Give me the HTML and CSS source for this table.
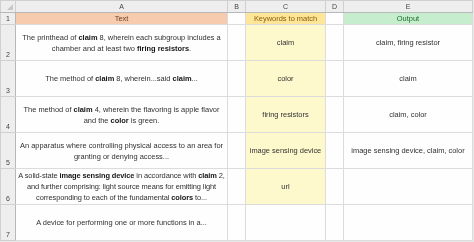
FILE: index.html
```html
<!DOCTYPE html>
<html>
<head>
<meta charset="utf-8">
<link rel="stylesheet" href="styles.css">
</head>
<body>
<table class="sheet">
  <colgroup>
    <col class="c-rh"><col class="c-a"><col class="c-b"><col class="c-c"><col class="c-d"><col class="c-e">
  </colgroup>
  <tr class="colhead">
    <th class="corner"><span class="tri"></span></th>
    <th>A</th><th>B</th><th>C</th><th>D</th><th>E</th>
  </tr>
  <tr class="r1">
    <th class="rh">1</th>
    <td class="h-text">Text</td>
    <td></td>
    <td class="h-kw">Keywords to match</td>
    <td></td>
    <td class="h-out">Output</td>
  </tr>
  <tr class="row">
    <th class="rh">2</th>
    <td>The printhead of <b>claim</b> 8, wherein each subgroup includes a<br>chamber and at least two <b>firing resistors</b>.</td>
    <td></td>
    <td class="kw">claim</td>
    <td></td>
    <td>claim, firing resistor</td>
  </tr>
  <tr class="row">
    <th class="rh">3</th>
    <td>The method of <b>claim</b> 8, wherein...said <b>claim</b>...</td>
    <td></td>
    <td class="kw">color</td>
    <td></td>
    <td>claim</td>
  </tr>
  <tr class="row">
    <th class="rh">4</th>
    <td>The method of <b>claim</b> 4, wherein the flavoring is apple flavor<br>and the <b>color</b> is green.</td>
    <td></td>
    <td class="kw">firing resistors</td>
    <td></td>
    <td>claim, color</td>
  </tr>
  <tr class="row">
    <th class="rh">5</th>
    <td>An apparatus where controlling physical access to an area for<br>granting or denying access...</td>
    <td></td>
    <td class="kw">image sensing device</td>
    <td></td>
    <td>image sensing device, claim, color</td>
  </tr>
  <tr class="row">
    <th class="rh">6</th>
    <td class="tight">A solid-state <b>image sensing device</b> in accordance with <b>claim</b> 2,<br>and further comprising: light source means for emitting light<br>corresponding to each of the fundamental <b>colors</b> to...</td>
    <td></td>
    <td class="kw">url</td>
    <td></td>
    <td></td>
  </tr>
  <tr class="row">
    <th class="rh">7</th>
    <td>A device for performing one or more functions in a...</td>
    <td></td>
    <td></td>
    <td></td>
    <td></td>
  </tr>
</table>
</body>
</html>
```
FILE: styles.css
```css
html, body {
  margin: 0;
  padding: 0;
  background: #e9e9e9;
}
.sheet {
  border-collapse: collapse;
  table-layout: fixed;
  width: 472px;
  font-family: "Liberation Sans", Arial, sans-serif;
  font-size: 7.45px;
  color: #303030;
  opacity: 0.999;
  will-change: opacity;
}
.c-rh { width: 15px; }
.c-a { width: 212px; }
.c-b { width: 18px; }
.c-c { width: 80px; }
.c-d { width: 18px; }
.c-e { width: 129px; }

.sheet td, .sheet th {
  border: 1px solid #dcdcdc;
  padding: 0;
  background: #ffffff;
  text-align: center;
  vertical-align: middle;
  font-weight: normal;
  overflow: hidden;
  white-space: nowrap;
  line-height: 11px;
}
.sheet .tight {
  letter-spacing: -0.1px;
}
.colhead th {
  height: 11px;
  color: #444;
  font-size: 7px;
  border-color: #d0d0d0;
  border-bottom-color: #b8b8b8;
}
.sheet .colhead th {
  background: #efefef;
}
.corner {
  position: relative;
}
.tri {
  position: absolute;
  right: 2px;
  bottom: 2px;
  width: 0;
  height: 0;
  border-left: 6px solid transparent;
  border-bottom: 6px solid #c8c8c8;
}
.sheet .rh {
  background: #efefef;
  color: #444;
  font-size: 7px;
  border-color: #d0d0d0;
  border-right-color: #b8b8b8;
}
.row .rh {
  vertical-align: bottom;
  line-height: 10px;
}
.r1 td, .r1 th {
  height: 11px;
}
.row td, .row th {
  height: 35px;
}
.sheet .h-text {
  background: #f8cbad;
  color: #6b3f22;
}
.sheet .h-kw {
  background: #ffe699;
  color: #8a5a0a;
}
.sheet .h-out {
  background: #c6efce;
  color: #1e6b2c;
}
.sheet .kw {
  background: #fffacd;
}
b {
  font-weight: bold;
  color: #151515;
}
```
